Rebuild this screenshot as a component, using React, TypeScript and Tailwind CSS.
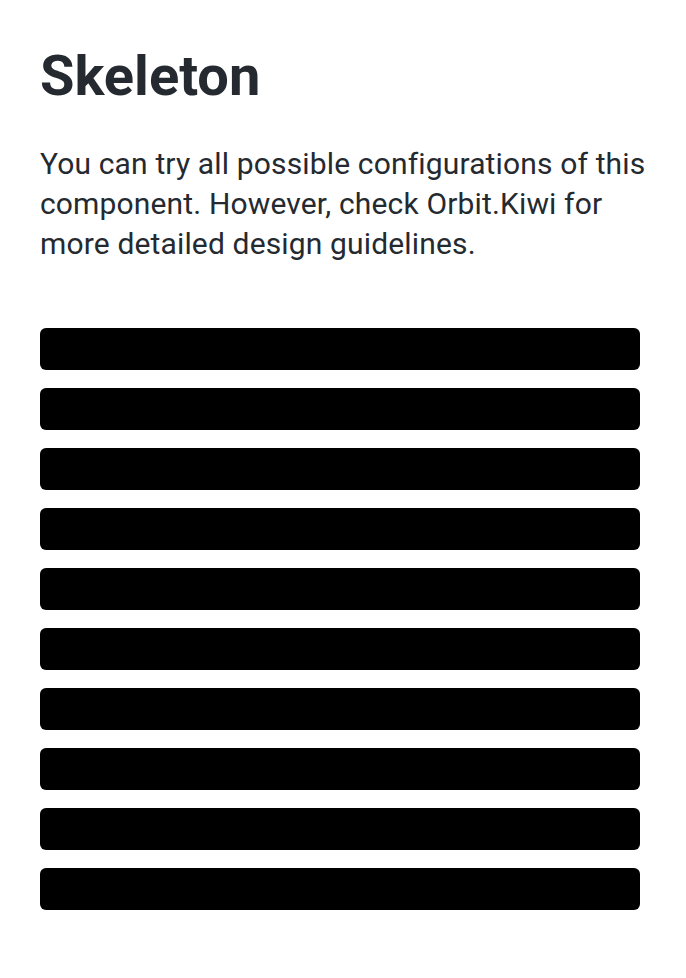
export default function App() {
  const rows = Array.from({ length: 10 }, (_, i) => i);
  return (
    <div className="min-h-screen bg-white px-10 pt-[40px] font-['Roboto',sans-serif] text-[#252a31]">
      <h1 className="text-[56px] font-bold leading-[72px]">Skeleton</h1>
      <p className="mt-[32px] w-[610px] text-[30px] leading-[40px] tracking-[0.15px]">
        You can try all possible configurations of this component. However, check Orbit.Kiwi for more
        detailed design guidelines.
      </p>
      <div className="mt-[64px] flex w-[600px] flex-col gap-[18px]">
        {rows.map((i) => (
          <div key={i} className="h-[42px] rounded-[6px] bg-black" />
        ))}
      </div>
    </div>
  );
}
